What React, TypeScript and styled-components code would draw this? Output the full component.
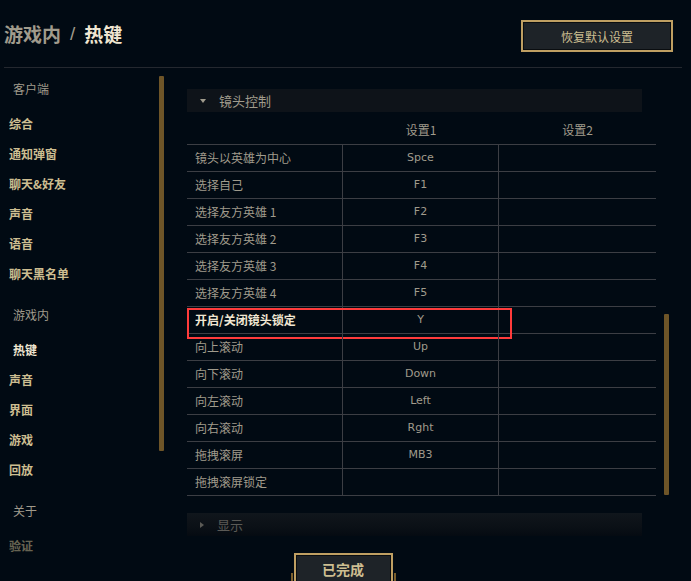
import React from "react";
import styled, { createGlobalStyle } from "styled-components";

const Global = createGlobalStyle`
  html, body { margin: 0; padding: 0; background: #010a13; }
  body { font-family: "Noto Sans CJK SC", "Noto Sans", sans-serif; }
  * { box-sizing: border-box; }
`;

const Page = styled.div`
  width: 691px;
  height: 581px;
  overflow: hidden;
  background: #010a13;
  display: flex;
  flex-direction: column;
`;

const Header = styled.div`
  flex-shrink: 0;
  height: 68px;
  margin: 0 9px 0 4px;
  border-bottom: 1px solid #24282f;
  display: flex;
  align-items: flex-start;
  justify-content: space-between;
`;

const Title = styled.h1`
  margin: 22px 0 0 0;
  font-size: 19px;
  line-height: 24px;
  font-weight: 700;
  color: #a09b8c;
  display: flex;
  align-items: center;
`;

const Sep = styled.span`
  margin: 0 9px 0 9px;
  font-weight: 400;
  font-family: "Liberation Sans", sans-serif;
`;

const Current = styled.span`
  color: #f0e6d2;
`;

const ResetButton = styled.button`
  margin: 20px 9px 0 0;
  width: 152px;
  height: 32px;
  background: #1e2328;
  border: 2px solid #bf9f62;
  box-shadow: inset 0 0 0 1px #0a0d10;
  color: #cdbe91;
  font-family: inherit;
  font-size: 12px;
  padding: 0;
`;

const Body = styled.div`
  flex: 1;
  display: flex;
  min-height: 0;
  overflow: hidden;
`;

const Sidebar = styled.div`
  width: 187px;
  flex-shrink: 0;
  display: flex;
  align-items: flex-start;
`;

const Nav = styled.nav`
  width: 159px;
  padding-top: 11px;
  display: flex;
  flex-direction: column;
  & > * { flex-shrink: 0; }
`;

const SectionLabel = styled.div<{ $first?: boolean }>`
  height: 20px;
  line-height: 20px;
  margin-top: ${(p) => (p.$first ? "0" : "16px")};
  margin-bottom: 10px;
  padding-left: 13px;
  font-size: 12px;
  color: #a09b8c;
`;

const NavItem = styled.div<{ $active?: boolean; $faded?: boolean }>`
  height: 30px;
  line-height: 30px;
  padding-left: ${(p) => (p.$active ? "13px" : "9px")};
  font-size: 12px;
  font-weight: 700;
  color: ${(p) => (p.$active ? "#f0e6d2" : "#cdbe91")};
  opacity: ${(p) => (p.$faded ? 0.5 : 1)};
`;

const ScrollThumb = styled.div<{ $top: number; $height: number }>`
  flex-shrink: 0;
  width: 5px;
  margin-top: ${(p) => p.$top}px;
  height: ${(p) => p.$height}px;
  background: #6e5528;
  border-radius: 1px;
`;

const Main = styled.div`
  flex: 1;
  display: flex;
  align-items: flex-start;
`;

const Content = styled.div`
  width: 469px;
  flex-shrink: 0;
  padding-top: 21px;
  display: flex;
  flex-direction: column;
  & > * { flex-shrink: 0; }
`;

const GroupBar = styled.div<{ $fade?: boolean }>`
  width: 455px;
  height: 23px;
  display: flex;
  align-items: center;
  padding-left: 13px;
  background: ${(p) =>
    p.$fade
      ? "linear-gradient(180deg, #10161c 0%, #0b1016 60%, #050b12 100%)"
      : "#0e1319"};
  font-size: 13px;
  color: ${(p) => (p.$fade ? "#5b5a56" : "#a09b8c")};
`;

const Caret = styled.span<{ $open?: boolean }>`
  width: 0;
  height: 0;
  margin-right: 13px;
  border-style: solid;
  ${(p) =>
    p.$open
      ? "border-width: 4px 3px 0 3px; border-color: #a09b8c transparent transparent transparent;"
      : "border-width: 3px 0 3px 4px; border-color: transparent transparent transparent #5b5a56;"}
`;

const Table = styled.div`
  display: flex;
  flex-direction: column;
  & > * { flex-shrink: 0; }
`;

const HeadRow = styled.div`
  height: 33px;
  display: grid;
  grid-template-columns: 156px 156px 157px;
  align-items: center;
  border-bottom: 1px solid #3c3e44;
  font-size: 12px;
  color: #a09b8c;
`;

const HeadCell = styled.div`
  text-align: center;
  padding-top: 3px;
`;

const Row = styled.div<{ $hl?: boolean }>`
  position: relative;
  height: 27px;
  display: grid;
  grid-template-columns: 156px 156px 157px;
  border-bottom: 1px solid #3c3e44;
  font-size: 12px;
  color: #a09b8c;
  ${(p) =>
    p.$hl
      ? `&::after {
    content: "";
    position: absolute;
    left: 0;
    top: 1px;
    width: 321px;
    height: 27px;
    border: 2px solid #ff3b3b;
    pointer-events: none;
  }`
      : ""}
`;

const NameCell = styled.div<{ $hl?: boolean }>`
  padding-left: 8px;
  line-height: 26px;
  border-right: 1px solid #3c3e44;
  color: ${(p) => (p.$hl ? "#f0e6d2" : "#a09b8c")};
  font-weight: ${(p) => (p.$hl ? 700 : 400)};
`;

const KeyCell = styled.div<{ $last?: boolean }>`
  line-height: 26px;
  text-align: center;
  font-family: "DejaVu Sans", "Noto Sans", sans-serif;
  font-size: 11px;
  border-right: ${(p) => (p.$last ? "none" : "1px solid #3c3e44")};
`;

const Spacer = styled.div`
  height: 17px;
`;

const Footer = styled.div`
  width: 312px;
  display: flex;
  justify-content: center;
  padding-top: 17px;
`;

const DoneButton = styled.button`
  position: relative;
  width: 99px;
  height: 36px;
  background: #1e2328;
  border: 2px solid #bf9f62;
  box-shadow: inset 0 0 0 1px #0a0d10;
  color: #cdbe91;
  font-family: inherit;
  font-size: 14px;
  font-weight: 700;
  padding: 0 0 4px 0;
  &::before,
  &::after {
    content: "";
    position: absolute;
    top: 18px;
    width: 2px;
    height: 16px;
    background: #7a5e2c;
  }
  &::before { left: -5px; }
  &::after { right: -5px; }
`;

const RightTrack = styled.div`
  width: 20px;
  display: flex;
  justify-content: center;
`;

const rows: [string, string][] = [
  ["镜头以英雄为中心", "Spce"],
  ["选择自己", "F1"],
  ["选择友方英雄 1", "F2"],
  ["选择友方英雄 2", "F3"],
  ["选择友方英雄 3", "F4"],
  ["选择友方英雄 4", "F5"],
  ["开启/关闭镜头锁定", "Y"],
  ["向上滚动", "Up"],
  ["向下滚动", "Down"],
  ["向左滚动", "Left"],
  ["向右滚动", "Rght"],
  ["拖拽滚屏", "MB3"],
  ["拖拽滚屏锁定", ""],
];

export default function App() {
  return (
    <Page>
      <Global />
      <Header>
        <Title>
          游戏内<Sep>/</Sep>
          <Current>热键</Current>
        </Title>
        <ResetButton>恢复默认设置</ResetButton>
      </Header>
      <Body>
        <Sidebar>
          <Nav>
            <SectionLabel $first>客户端</SectionLabel>
            <NavItem>综合</NavItem>
            <NavItem>通知弹窗</NavItem>
            <NavItem>聊天&amp;好友</NavItem>
            <NavItem>声音</NavItem>
            <NavItem>语音</NavItem>
            <NavItem>聊天黑名单</NavItem>
            <SectionLabel>游戏内</SectionLabel>
            <NavItem $active>热键</NavItem>
            <NavItem>声音</NavItem>
            <NavItem>界面</NavItem>
            <NavItem>游戏</NavItem>
            <NavItem>回放</NavItem>
            <SectionLabel>关于</SectionLabel>
            <NavItem $faded>验证</NavItem>
          </Nav>
          <ScrollThumb $top={8} $height={375} />
        </Sidebar>
        <Main>
          <Content>
            <GroupBar>
              <Caret $open />
              镜头控制
            </GroupBar>
            <Table>
              <HeadRow>
                <div />
                <HeadCell>设置1</HeadCell>
                <HeadCell>设置2</HeadCell>
              </HeadRow>
              {rows.map(([name, key]) => {
                const hl = name === "开启/关闭镜头锁定";
                return (
                  <Row key={name} $hl={hl}>
                    <NameCell $hl={hl}>{name}</NameCell>
                    <KeyCell>{key}</KeyCell>
                    <KeyCell $last />
                  </Row>
                );
              })}
            </Table>
            <Spacer />
            <GroupBar $fade>
              <Caret />
              显示
            </GroupBar>
            <Footer>
              <DoneButton>已完成</DoneButton>
            </Footer>
          </Content>
          <RightTrack>
            <ScrollThumb $top={246} $height={181} />
          </RightTrack>
        </Main>
      </Body>
    </Page>
  );
}
